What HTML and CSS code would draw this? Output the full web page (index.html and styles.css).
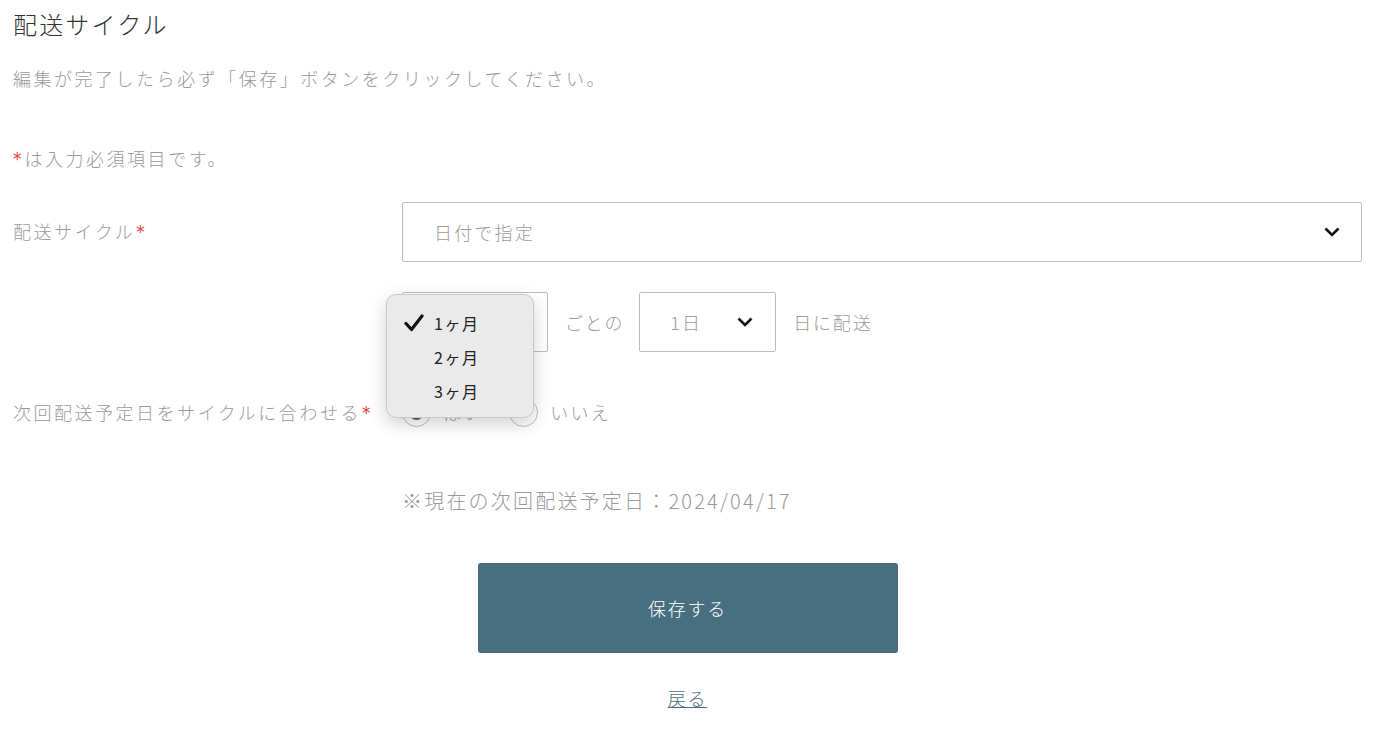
FILE: index.html
```html
<!DOCTYPE html>
<html lang="ja">
<head>
  <meta charset="UTF-8">
  <title>配送サイクル</title>
  <link rel="stylesheet" href="styles.css">
</head>
<body>
  <div class="container">
    <h1>配送サイクル</h1>
    <p class="lead">編集が完了したら必ず「保存」ボタンをクリックしてください。</p>
    <p class="required-note"><span class="req">*</span>は入力必須項目です。</p>

    <form class="form" onsubmit="event.preventDefault();">
      <div class="row row-select">
        <div class="label">配送サイクル<span class="req">*</span></div>
        <div class="field">
          <div class="select select-wide">
            <span>日付で指定</span>
            <svg class="chevron" width="16" height="10" viewBox="0 0 16 10"><polyline points="1.5,1.5 8,8 14.5,1.5" fill="none" stroke="#111" stroke-width="2.6"/></svg>
          </div>
        </div>
      </div>

      <div class="row row-select">
        <div class="label"></div>
        <div class="field inline">
          <div class="select select-month">
            <span>1ヶ月</span>
            <div class="menu">
              <div class="menu-item">
                <svg class="check" width="20" height="18" viewBox="0 0 20 18"><path d="M2 9.5 L7.5 15.5 L18 2" fill="none" stroke="#111" stroke-width="3.2" stroke-linecap="round" stroke-linejoin="round"/></svg>
                <span>1ヶ月</span>
              </div>
              <div class="menu-item"><span>2ヶ月</span></div>
              <div class="menu-item"><span>3ヶ月</span></div>
            </div>
          </div>
          <span class="text text-every">ごとの</span>
          <div class="select select-day">
            <span>1日</span>
            <svg class="chevron" width="16" height="10" viewBox="0 0 16 10"><polyline points="1.5,1.5 8,8 14.5,1.5" fill="none" stroke="#111" stroke-width="2.6"/></svg>
          </div>
          <span class="text">日に配送</span>
        </div>
      </div>

      <div class="row row-radio">
        <div class="label">次回配送予定日をサイクルに合わせる<span class="req">*</span></div>
        <div class="field inline radios">
          <label class="radio"><span class="dot checked"></span>はい</label>
          <label class="radio"><span class="dot"></span>いいえ</label>
        </div>
      </div>

      <div class="row row-note">
        <div class="label"></div>
        <div class="field note">※現在の次回配送予定日：2024/04/17</div>
      </div>

      <div class="actions">
        <button type="submit" class="save">保存する</button>
        <a href="#" class="back">戻る</a>
      </div>
    </form>
  </div>
</body>
</html>
```

FILE: styles.css
```css
body {
  margin: 0;
  background-color: #fff;
  font-family: "Noto Sans CJK JP", "Noto Sans", sans-serif;
  font-weight: 300;
  color: #999;
}

.container {
  padding: 6px 16px 0 13px;
}

h1 {
  margin: 0;
  font-size: 24px;
  line-height: 36px;
  font-weight: 300;
  color: #333;
  letter-spacing: 0.09em;
}

.lead {
  margin: 21px 0 0;
  font-size: 18px;
  line-height: 30px;
  letter-spacing: 0.14em;
  color: #9a9a9a;
}

.required-note {
  margin: 50px 0 0;
  font-size: 18px;
  line-height: 30px;
  letter-spacing: 0.14em;
  color: #9a9a9a;
}

.req {
  color: #e8413a;
  font-family: "DejaVu Sans", sans-serif;
  font-size: 17px;
  font-weight: 400;
  line-height: 0;
  letter-spacing: 0;
  margin-left: 1px;
  vertical-align: 1px;
}

.required-note .req {
  margin-left: 0;
  margin-right: 3px;
}

.form {
  margin-top: 29px;
}

.row {
  display: flex;
  align-items: center;
}

.row-select + .row-select {
  margin-top: 30px;
}

.label {
  width: 389px;
  flex-shrink: 0;
  font-size: 18px;
  line-height: 30px;
  letter-spacing: 0.14em;
  color: #9a9a9a;
}

.row-select .label {
  align-self: flex-start;
  margin-top: 14px;
}

.field {
  flex: 1;
}

.inline {
  display: flex;
  align-items: center;
  gap: 17px;
}

.select {
  position: relative;
  box-sizing: border-box;
  height: 60px;
  display: flex;
  align-items: center;
  justify-content: space-between;
  border: 1px solid #bdbdbd;
  border-radius: 2px;
  font-size: 18px;
  letter-spacing: 0.12em;
  color: #9a9a9a;
}

.select-wide {
  padding: 0 21px 0 31px;
}

.select-month {
  width: 146px;
  padding-left: 31px;
}

.select-day {
  width: 137px;
  padding: 0 22px 0 30px;
}

.text {
  font-size: 18px;
  letter-spacing: 0.1em;
  color: #9a9a9a;
}

.text-every {
  margin-right: -2px;
}

.menu {
  position: absolute;
  left: -17px;
  top: 1px;
  width: 148px;
  box-sizing: border-box;
  padding: 11px 0 9px;
  background-color: #e9eae9;
  border: 1px solid #c9c9c9;
  border-radius: 10px;
  box-shadow: 0 6px 18px rgba(0, 0, 0, 0.18);
  z-index: 2;
}

.menu-item {
  position: relative;
  height: 34px;
  display: flex;
  align-items: center;
  padding-left: 47px;
  font-size: 16px;
  font-weight: 400;
  letter-spacing: 0.1em;
  color: #222;
}

.check {
  position: absolute;
  left: 17px;
  top: 8px;
}

.row-radio {
  margin-top: 45px;
}

.radios {
  gap: 0;
}

.radio {
  display: flex;
  align-items: center;
  font-size: 18px;
  letter-spacing: 0.12em;
  color: #9a9a9a;
  margin-right: 26px;
}

.dot {
  box-sizing: border-box;
  width: 29px;
  height: 29px;
  border: 1px solid #bdbdbd;
  border-radius: 50%;
  margin-right: 12px;
  display: flex;
  align-items: center;
  justify-content: center;
}

.dot.checked::after {
  content: "";
  width: 15px;
  height: 15px;
  border-radius: 50%;
  background-color: #476f80;
}

.row-note {
  margin-top: 59px;
}

.note {
  font-size: 20px;
  line-height: 30px;
  letter-spacing: 0.11em;
  color: #9a9a9a;
}

.actions {
  display: flex;
  flex-direction: column;
  align-items: center;
  margin-top: 47px;
}

.save {
  width: 420px;
  height: 90px;
  border: none;
  border-radius: 3px;
  background-color: #476f80;
  color: #fff;
  font-family: inherit;
  font-size: 18px;
  font-weight: 300;
  letter-spacing: 0.1em;
  cursor: pointer;
}

.back {
  margin-top: 30px;
  font-size: 18px;
  line-height: 30px;
  letter-spacing: 0.1em;
  color: #476f80;
}
```
